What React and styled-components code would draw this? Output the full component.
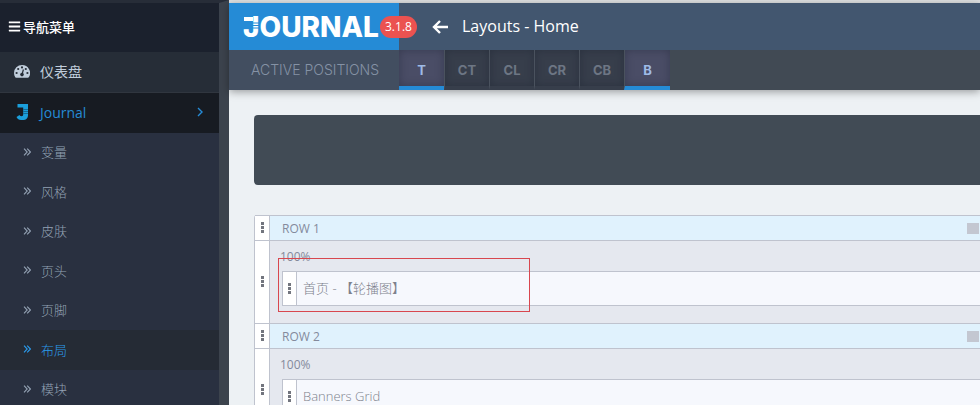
import React from "react";
import styled, { createGlobalStyle } from "styled-components";
import { FaBars } from "react-icons/fa";

const GlobalStyle = createGlobalStyle`
  * {
    box-sizing: border-box;
  }

  body {
    margin: 0;
    background: #edf1f4;
    font-family: "Open Sans", "Noto Sans CJK SC", sans-serif;
    font-size: 13px;
    overflow-x: hidden;
    scrollbar-width: none;
  }

  ul {
    margin: 0;
    padding: 0;
    list-style: none;
  }

  a {
    color: inherit;
    text-decoration: none;
  }
`;

const Page = styled.div`
  display: flex;
  min-height: 100vh;
`;

const Sidebar = styled.nav`
  flex: 0 0 229px;
  border-top: 3px solid #272d38;
  border-right: 10px solid #3c434d;
  background: #293040;
`;

const MenuTitle = styled.div`
  display: flex;
  align-items: center;
  gap: 2px;
  height: 49px;
  padding: 0 0 2px 8px;
  background: #1b212d;
  color: #fff;
  font-size: 13px;
  font-weight: 500;
`;

const MenuLink = styled.a`
  display: flex;
  align-items: center;
  height: 40px;
  padding: 0 16px 2px 14px;
  background: ${({ $open }) => ($open ? "#171b22" : "#262d37")};
  color: ${({ $open }) => ($open ? "#258bd6" : "#c0cddb")};
  font-size: 14px;

  span {
    flex: 1;
  }
`;

const MenuDivider = styled.div`
  height: 1px;
  background: #30363f;
`;

const MenuIcon = styled.svg`
  width: 16px;
  height: 18px;
  margin-right: 10px;
  flex: none;
`;

const SubItem = styled.li`
  height: 39px;

  &:nth-child(even) {
    height: 40px;
  }
`;

const SubLink = styled.a`
  display: flex;
  align-items: center;
  gap: 10px;
  height: 100%;
  padding: 0 0 2px 23px;
  background: ${({ $active }) => ($active ? "#252b35" : "transparent")};
  color: ${({ $active }) => ($active ? "#2b9bec" : "#93a1b3")};
  font-size: 13px;
  font-weight: 300;
`;

const Main = styled.main`
  flex: 1;
  min-width: 0;
  border-top: 3px solid #dfe1e2;
`;

const Header = styled.header`
  box-shadow: 0 2px 8px rgba(0, 0, 0, 0.35);
`;

const TopBar = styled.div`
  display: flex;
  align-items: center;
  height: 47px;
  background: #42566f;
`;

const Brand = styled.a`
  position: relative;
  display: flex;
  align-items: center;
  flex: 0 0 170px;
  height: 100%;
  padding-left: 14px;
  background: #258bd6;
  color: #fff;
  font-family: Inter, sans-serif;
  font-size: 28px;
  font-weight: 800;
`;

const Stripes = styled.svg`
  position: absolute;
  left: 14px;
  top: 14px;
  width: 16px;
  height: 14px;
`;

const Version = styled.span`
  position: absolute;
  left: 151px;
  top: 13px;
  padding: 0 5px;
  border-radius: 11px;
  background: #eb5250;
  font-family: "Open Sans", sans-serif;
  font-size: 12px;
  font-weight: 400;
  line-height: 22px;
`;

const BackButton = styled.button`
  display: flex;
  margin: 0 14px 0 33px;
  padding: 0;
  border: 0;
  background: none;
  color: #fff;
`;

const Title = styled.h1`
  margin: 0;
  padding-bottom: 2px;
  color: #fff;
  font-size: 16px;
  font-weight: 400;
`;

const Positions = styled.div`
  display: flex;
  height: 40px;
  background: #414a54;
`;

const PositionsLabel = styled.div`
  flex: 0 0 170px;
  padding-left: 22px;
  background: #424e60;
  color: #8592a5;
  font-family: Inter, sans-serif;
  font-size: 14px;
  font-weight: 300;
  line-height: 40px;
`;

const Tab = styled.button`
  width: 45px;
  padding: 4px 0 0;
  border: 0;
  border-bottom: 4px solid ${({ $active }) => ($active ? "#258bd6" : "#373e4b")};
  background: ${({ $active }) => ($active ? "#4a4d66" : "#373e4b")};
  box-shadow: inset 0 0 8px rgba(20, 25, 40, 0.35);
  color: ${({ $active }) => ($active ? "#9fbbe6" : "#6d7684")};
  font-family: Inter, sans-serif;
  font-size: 13px;
  font-weight: 700;

  & + & {
    border-left: 1px solid #4a525e;
  }

  &:last-child {
    width: 46px;
  }
`;

const Content = styled.div`
  padding: 25px 0 30px 25px;
`;

const Banner = styled.div`
  height: 70px;
  margin-bottom: 30px;
  border-radius: 4px 0 0 4px;
  background: #414b55;
`;

const Grid = styled.div`
  border-left: 1px solid #bfc3ce;
  border-bottom: 1px solid #bfc3ce;
  border-radius: 3px 0 0 0;
  color: #848a9c;
`;

const RowHead = styled.div`
  display: flex;
  align-items: stretch;
  height: 25px;
  border-top: 1px solid #bfc3ce;
  background: #e0f2fd;
  font-size: 12px;
  line-height: 24px;
`;

const RowName = styled.div`
  flex: 1;
  padding: 1px 0 0 12px;
`;

const RowAction = styled.button`
  align-self: center;
  width: 12px;
  height: 11px;
  margin-right: 1px;
  padding: 0;
  border: 0;
  background: #c3c7d1;
`;

const RowBody = styled.div`
  display: flex;
  border-top: 1px solid #bfc3ce;
  background: #e5e8ef;
`;

const HandleBox = styled.div`
  display: flex;
  align-items: center;
  justify-content: center;
  flex: 0 0 15px;
  padding-bottom: 1px;
  border-right: 1px solid #bfc3ce;
  background: #fff;
`;

const Column = styled.div`
  position: relative;
  flex: 1;
  padding: 8px 0 17px 12px;
`;

const ColumnSize = styled.div`
  margin: 0 0 6px -2px;
  font-size: 12px;
  line-height: 16px;
`;

const Module = styled.div`
  display: flex;
  height: 35px;
  border: 1px solid #bfc3ce;
  border-right: 0;
  background: #f6f8fd;
  color: #7d818c;
  font-size: 13px;
  font-weight: 300;
  line-height: 33px;

  ${HandleBox} {
    flex-basis: 14px;
  }
`;

const ModuleName = styled.div`
  padding-left: 6px;
`;

const Marker = styled.div`
  position: absolute;
  left: 8px;
  top: 17px;
  width: 252px;
  height: 54px;
  border: 1px solid #d8474f;
`;

const subMenu = ["变量", "风格", "皮肤", "页头", "页脚", "布局", "模块"];

const tabs = ["T", "CT", "CL", "CR", "CB", "B"];
const activeTabs = ["T", "B"];

const rows = [
  { name: "ROW 1", module: "首页 - 【轮播图】", marked: true },
  { name: "ROW 2", module: "Banners Grid" }
];

const Handle = () => (
  <HandleBox>
    <svg width="3" height="11" viewBox="0 0 3 11" fill="#72757e">
      <rect width="3" height="3" />
      <rect y="4" width="3" height="3" />
      <rect y="8" width="3" height="3" />
    </svg>
  </HandleBox>
);

const GaugeIcon = () => (
  <MenuIcon viewBox="0 0 16 18">
    <path
      fill="#c0cddb"
      d="M8 3a8 8 0 0 0-8 8c0 1.600.4 3 1.200 4.300.2.300.5.500.9.500h11.800c.4 0 .7-.2.900-.5A8 8 0 0 0 8 3z"
    />
    <g fill="#262d37">
      <circle cx="2.600" cy="11" r="1.100" />
      <circle cx="4.200" cy="7" r="1.100" />
      <circle cx="8" cy="5.400" r="1.100" />
      <circle cx="11.800" cy="7" r="1.100" />
      <circle cx="13.400" cy="11" r="1.100" />
      <circle cx="8" cy="12.600" r="1.800" />
    </g>
    <path d="M8 12.500L9.400 7.500" stroke="#262d37" strokeWidth="1.200" />
  </MenuIcon>
);

const JournalIcon = () => (
  <MenuIcon viewBox="0 0 16 18">
    <path
      fill="#1b9fdb"
      d="M3.500 1H14v11.500a4.500 4.500 0 0 1-4.500 4.500H7a5 5 0 0 1-4.500-3l3-2c.5.800 1 1.200 1.900 1.200 1.400 0 1.800-.8 1.800-2V4.500H3.500z"
    />
    <path d="M9 6.500h5M9 8.500h5M9 10.500h5" stroke="#146c98" />
  </MenuIcon>
);

const AngleIcon = () => (
  <svg width="6" height="10" viewBox="0 0 6 10" fill="none">
    <path d="M1 1l4 4-4 4" stroke="currentColor" strokeWidth="1.400" />
  </svg>
);

const DoubleAngleIcon = () => (
  <svg width="8" height="8" viewBox="0 0 8 8" fill="none">
    <path
      d="M1 .7L4.200 4 1 7.300M4.200 .7L7.400 4 4.200 7.300"
      stroke="currentColor"
      strokeWidth="1.100"
    />
  </svg>
);

const ArrowIcon = () => (
  <svg width="16" height="16" viewBox="0 0 16 16" fill="none">
    <path d="M8 2L2 8l6 6M2 8h14" stroke="currentColor" strokeWidth="2.400" />
  </svg>
);

export default function App() {
  return (
    <Page>
      <GlobalStyle />
      <Sidebar>
        <MenuTitle>
          <FaBars size={13} /> 导航菜单
        </MenuTitle>
        <MenuLink href="#dashboard">
          <GaugeIcon />
          <span>仪表盘</span>
        </MenuLink>
        <MenuDivider />
        <MenuLink href="#journal" $open>
          <JournalIcon />
          <span>Journal</span>
          <AngleIcon />
        </MenuLink>
        <ul>
          {subMenu.map(item => (
            <SubItem key={item}>
              <SubLink href={`#${item}`} $active={item === "布局"}>
                <DoubleAngleIcon />
                {item}
              </SubLink>
            </SubItem>
          ))}
        </ul>
      </Sidebar>

      <Main>
        <Header>
          <TopBar>
            <Brand href="#home">
              JOURNAL
              <Stripes viewBox="0 0 16 14">
                <rect x="1" width="9" height="4" fill="#fff" />
                <path d="M6 6h10M6 8.500h10M6 11h10" stroke="#258bd6" />
              </Stripes>
              <Version>3.1.8</Version>
            </Brand>
            <BackButton aria-label="Back">
              <ArrowIcon />
            </BackButton>
            <Title>Layouts - Home</Title>
          </TopBar>
          <Positions>
            <PositionsLabel>ACTIVE POSITIONS</PositionsLabel>
            {tabs.map(tab => (
              <Tab key={tab} $active={activeTabs.includes(tab)}>
                {tab}
              </Tab>
            ))}
          </Positions>
        </Header>

        <Content>
          <Banner />
          <Grid>
            {rows.map(row => (
              <React.Fragment key={row.name}>
                <RowHead>
                  <Handle />
                  <RowName>{row.name}</RowName>
                  <RowAction aria-label={`${row.name} options`} />
                </RowHead>
                <RowBody>
                  <Handle />
                  <Column>
                    <ColumnSize>100%</ColumnSize>
                    <Module>
                      <Handle />
                      <ModuleName>{row.module}</ModuleName>
                    </Module>
                    {row.marked && <Marker />}
                  </Column>
                </RowBody>
              </React.Fragment>
            ))}
          </Grid>
        </Content>
      </Main>
    </Page>
  );
}
